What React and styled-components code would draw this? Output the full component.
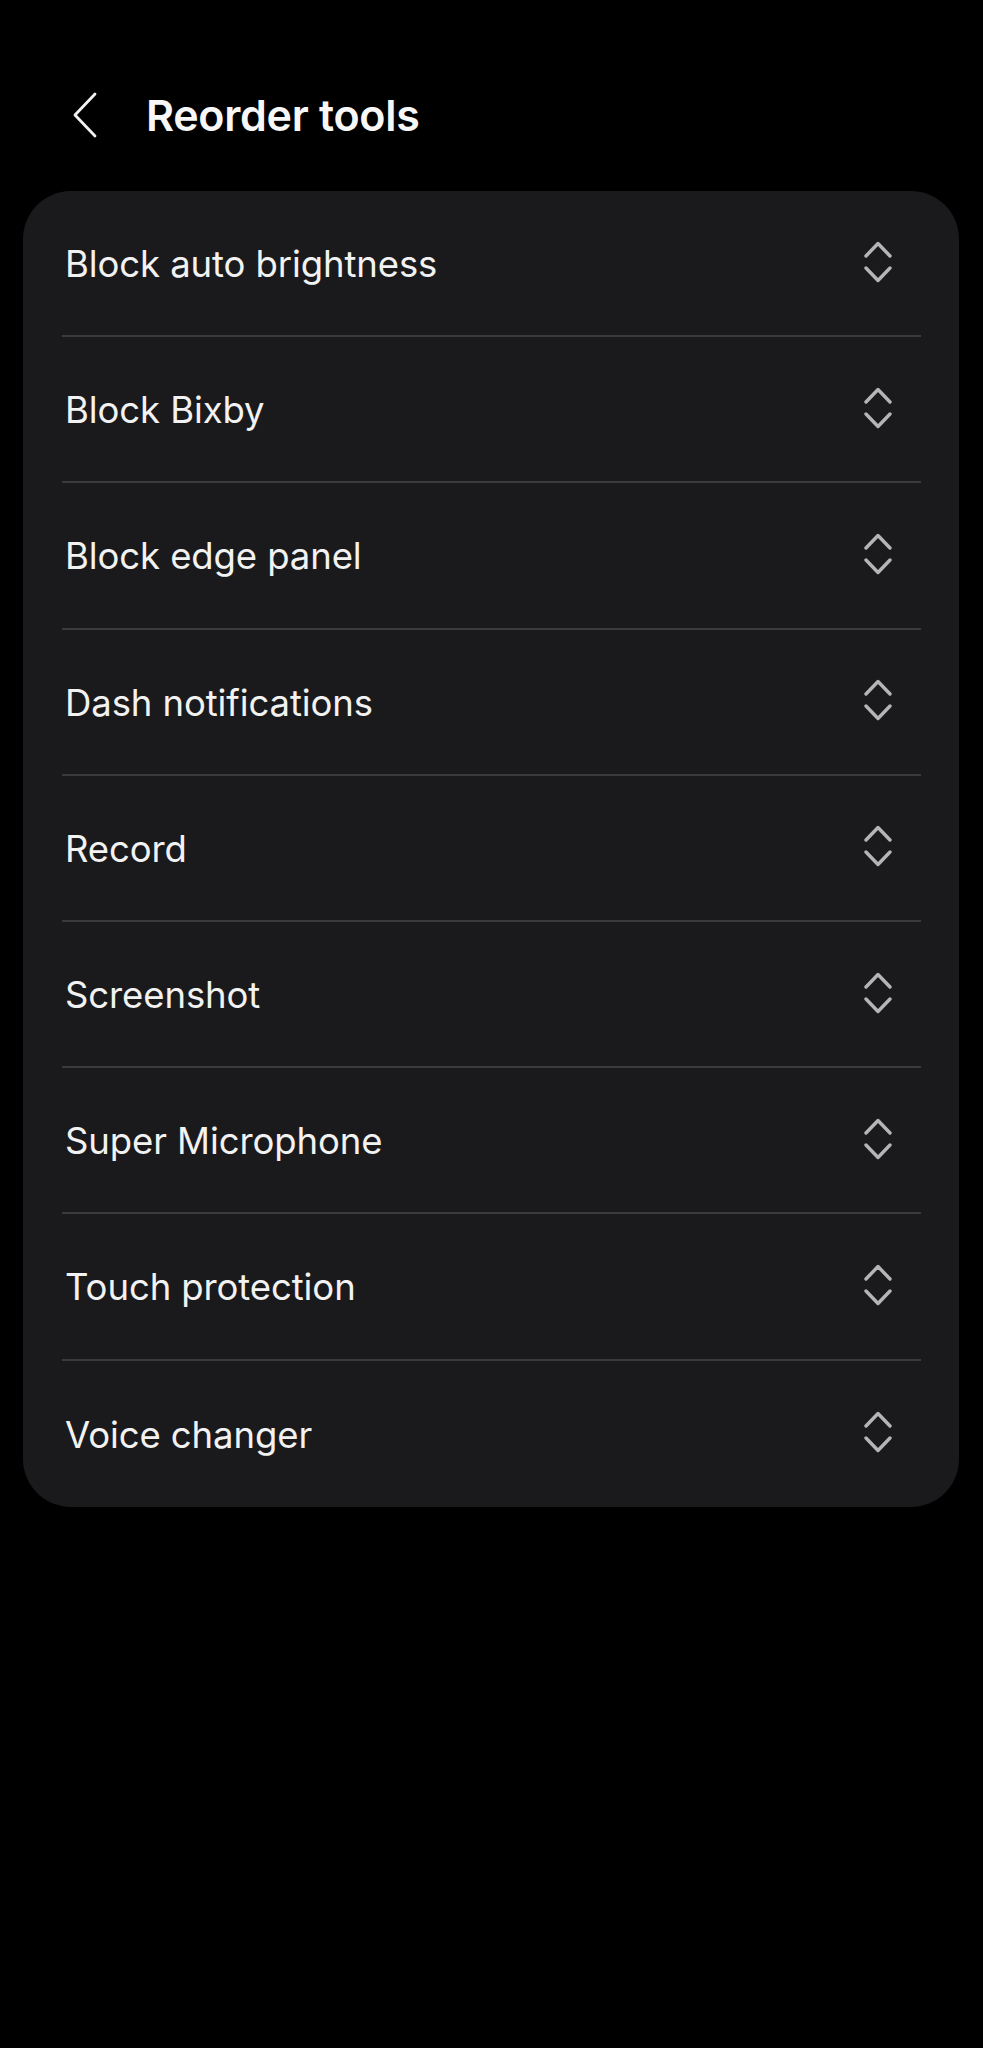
import React from 'react'
import styled, { createGlobalStyle } from 'styled-components'

const GlobalStyle = createGlobalStyle`
  html, body {
    margin: 0;
    padding: 0;
    background: #000000;
  }
  body {
    font-family: Inter, 'Noto Sans', sans-serif;
    -webkit-font-smoothing: antialiased;
  }
`

const Page = styled.div`
  min-height: 2048px;
  background: #000000;
  padding-top: 70px;
  box-sizing: border-box;
`

const Header = styled.div`
  display: flex;
  align-items: center;
  height: 90px;
  padding-left: 73px;
  gap: 47px;
`

const BackButton = styled.button`
  display: flex;
  align-items: center;
  background: none;
  border: none;
  padding: 0;
  cursor: pointer;
`

const Title = styled.h1`
  margin: 0;
  color: #f7f7f7;
  font-size: 43px;
  font-weight: 600;
  letter-spacing: -0.3px;
`

const Card = styled.div`
  margin: 31px 24px 0 23px;
  background: #1a1a1c;
  border-radius: 48px;
  padding: 0 38px 0 39px;
`

const Row = styled.div`
  display: flex;
  align-items: center;
  justify-content: space-between;
  box-sizing: border-box;
  height: 146.2px;
  border-bottom: 2px solid #3a3a3c;

  &:last-child {
    border-bottom: none;
  }
`

const Label = styled.span`
  color: #f2f2f2;
  font-size: 36.5px;
  font-weight: 400;
  padding-left: 3px;
  letter-spacing: -0.1px;
  margin-top: 2px;
`

const Handle = styled.div`
  display: flex;
  margin-right: 29px;
  margin-top: -3px;
`

const tools = [
  'Block auto brightness',
  'Block Bixby',
  'Block edge panel',
  'Dash notifications',
  'Record',
  'Screenshot',
  'Super Microphone',
  'Touch protection',
  'Voice changer',
]

const BackIcon = () => (
  <svg width="26" height="46" viewBox="0 0 26 46" fill="none">
    <path d="M22 2 L2 23 L22 44" stroke="#f2f2f2" strokeWidth="2.8" strokeLinecap="round" strokeLinejoin="round" />
  </svg>
)

const ReorderIcon = () => (
  <svg width="28" height="42" viewBox="0 0 28 42" fill="none">
    <path d="M2 15 L14 2.5 L26 15" stroke="#b5b5b7" strokeWidth="3.4" strokeLinecap="round" strokeLinejoin="round" />
    <path d="M2 27 L14 39.5 L26 27" stroke="#b5b5b7" strokeWidth="3.4" strokeLinecap="round" strokeLinejoin="round" />
  </svg>
)

const App = () => {
  return (
    <Page>
      <GlobalStyle />
      <Header>
        <BackButton aria-label="Back"><BackIcon /></BackButton>
        <Title>Reorder tools</Title>
      </Header>
      <Card>
        {tools.map((t) => (
          <Row key={t}>
            <Label>{t}</Label>
            <Handle><ReorderIcon /></Handle>
          </Row>
        ))}
      </Card>
    </Page>
  )
}

export default App
